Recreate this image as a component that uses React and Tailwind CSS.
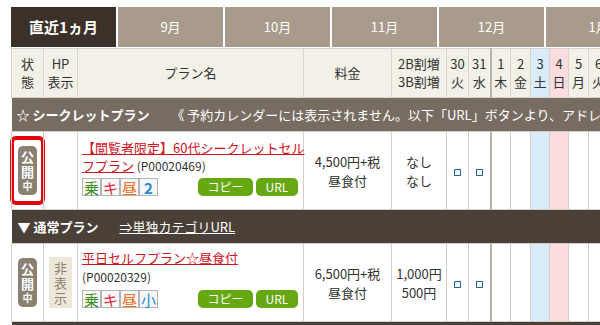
import React from "react";

const tabs = ["9月", "10月", "11月", "12月", "1月"];

const days = [
  { d: "30", w: "火", bg: "", cls: "" },
  { d: "31", w: "水", bg: "", cls: "border-r-2 border-r-[#b9b4aa]" },
  { d: "1", w: "木", bg: "", cls: "" },
  { d: "2", w: "金", bg: "", cls: "" },
  { d: "3", w: "土", bg: "bg-[#d9ecfa]", cls: "" },
  { d: "4", w: "日", bg: "bg-[#fbdcdf]", cls: "" },
  { d: "5", w: "月", bg: "", cls: "" },
  { d: "6", w: "火", bg: "", cls: "" },
  { d: "7", w: "水", bg: "", cls: "" },
];

// 32+34+226+88+55+22+22+20+20+19+19+20+20+20 = 617
const colWidths = [32, 34, 226, 88, 55, 22, 22, 20, 20, 19, 19, 20, 20, 20];

function StatusBadge() {
  return (
    <div className="mx-auto flex w-[19px] flex-col items-center rounded-[5px] bg-[#8b7f72] py-[3px] font-bold text-white">
      <span className="text-[13px] leading-[15px]">公</span>
      <span className="text-[13px] leading-[15px]">開</span>
      <span className="text-[10px] leading-[13px]">中</span>
    </div>
  );
}

function HiddenBadge() {
  return (
    <div className="mx-auto flex w-[23px] flex-col items-center rounded-[2px] bg-[#ede7da] py-[3px] text-[#8b7f72]">
      <span className="text-[13px] leading-[15px]">非</span>
      <span className="text-[13px] leading-[15px]">表</span>
      <span className="text-[13px] leading-[15px]">示</span>
    </div>
  );
}

function Tags({ last }) {
  const box = "flex h-[18px] w-[19px] items-center justify-center border border-[#b5b5b5] bg-[#f7f7f7] text-[15px] leading-none";
  return (
    <div className="flex">
      <span className={`${box} text-[#3f8f1f]`}>乗</span>
      <span className={`${box} text-[#e3243f]`}>キ</span>
      <span className={`${box} text-[#f06b1e]`}>昼</span>
      <span className={`${box} ${last === "2" ? "font-bold" : ""} text-[#2389d8]`}>{last}</span>
    </div>
  );
}

function Buttons() {
  const btn = "flex h-[18px] items-center justify-center rounded-[5px] bg-[#65a812] text-[12px] text-white";
  return (
    <div className="flex gap-[3px]">
      <span className={`${btn} w-[55px]`}>コピー</span>
      <span className={`${btn} w-[42px]`}>URL</span>
    </div>
  );
}

function Check() {
  return <span className="inline-block h-[7px] w-[7px] border border-[#2f6a8a] bg-[#eef6fb]" />;
}

function PlanRow({ highlight, hidden, name, code, price, extra, last }) {
  return (
    <tr className="h-[78px] bg-white text-[13px] text-[#333]">
      <td className="border border-[#d2cec6] p-0">
        {highlight ? (
          <div className="mx-[-2px] flex h-[69px] items-center rounded-[6px] border-4 border-[#e4000f]">
            <StatusBadge />
          </div>
        ) : (
          <StatusBadge />
        )}
      </td>
      <td className="border border-[#d2cec6] p-0">{hidden && <HiddenBadge />}</td>
      <td className="border border-[#d2cec6] px-[4px] align-top">
        <div className={highlight ? "pt-[7px]" : "pt-[5px]"}>
          <div className="whitespace-nowrap leading-[18px]">
            {name.map((line, i) => (
              <div key={i}>
                <a className="text-[#d0101b] underline">{line}</a>
                {i === name.length - 1 && code && <span className="text-[12px] text-[#333]"> {code}</span>}
              </div>
            ))}
          </div>
          {hidden && <div className="text-[12px] leading-[20px]">(P00020329)</div>}
          <div className="mt-[3px] flex items-center justify-between pr-[1px]">
            <Tags last={last} />
            <Buttons />
          </div>
        </div>
      </td>
      <td className="border border-[#d2cec6] text-center leading-[19px]">
        <div>{price}</div>
        <div>昼食付</div>
      </td>
      <td className="border border-[#d2cec6] text-center leading-[19px]">
        <div>{extra[0]}</div>
        <div>{extra[1]}</div>
      </td>
      {days.map((d, i) => (
        <td key={i} className={`border border-[#d2cec6] text-center ${d.bg} ${d.cls}`}>
          {i < 2 && <Check />}
        </td>
      ))}
    </tr>
  );
}

export default function App() {
  return (
    <div
      className="h-[325px] w-[600px] overflow-hidden bg-white"
      style={{ fontFamily: '"Noto Sans CJK JP", "Noto Sans", sans-serif' }}
    >
      <div className="flex gap-[2px] pl-[11px] pt-[7px]">
        <div className="flex h-[40px] w-[105px] shrink-0 items-center justify-center bg-[#3b3129] text-[15px] font-bold text-white">
          直近1ヵ月
        </div>
        {tabs.map((t) => (
          <div
            key={t}
            className="flex h-[40px] w-[105px] shrink-0 items-center justify-center bg-[#a99b8b] text-[13px] text-white"
          >
            {t}
          </div>
        ))}
      </div>

      <table className="ml-[11px] mt-px w-[617px] table-fixed border-collapse">
        <colgroup>
          {colWidths.map((w, i) => (
            <col key={i} style={{ width: w }} />
          ))}
        </colgroup>
        <thead>
          <tr className="h-[49px] bg-[#f2f0e7] text-[13px] leading-[18px] text-[#333]">
            <th className="border border-[#d7d3c9] font-normal">状<br />態</th>
            <th className="border border-[#d7d3c9] font-normal">HP<br />表示</th>
            <th className="border border-[#d7d3c9] font-normal">プラン名</th>
            <th className="border border-[#d7d3c9] font-normal">料金</th>
            <th className="border border-[#d7d3c9] font-normal">2B割増<br />3B割増</th>
            {days.map((d, i) => (
              <th key={i} className={`border border-[#d7d3c9] font-normal ${d.bg} ${d.cls}`}>
                {d.d}
                <br />
                {d.w}
              </th>
            ))}
          </tr>
        </thead>
        <tbody>
          <tr className="h-[34px] bg-[#776c61] text-[13px] text-white">
            <td colSpan={14} className="overflow-hidden whitespace-nowrap pl-[5px]">
              <span className="font-bold">☆ シークレットプラン</span>
              <span className="ml-[22px]">《 予約カレンダーには表示されません。以下「URL」ボタンより、アドレスをコピーしてご利用ください。》</span>
            </td>
          </tr>
          <PlanRow
            highlight
            name={["【閲覧者限定】60代シークレットセル", "フプラン"]}
            code="(P00020469)"
            price="4,500円+税"
            extra={["なし", "なし"]}
            last="2"
          />
          <tr className="h-[34px] bg-[#4a4037] text-[13px] text-white">
            <td colSpan={14} className="overflow-hidden whitespace-nowrap pl-[6px]">
              <span className="font-bold">▼ 通常プラン</span>
              <a className="ml-[21px] underline">⇒単独カテゴリURL</a>
            </td>
          </tr>
          <PlanRow
            hidden
            name={["平日セルフプラン☆昼食付"]}
            price="6,500円+税"
            extra={["1,000円", "500円"]}
            last="小"
          />
          <tr className="h-[34px] bg-[#4a4037]">
            <td colSpan={14} />
          </tr>
        </tbody>
      </table>
    </div>
  );
}
